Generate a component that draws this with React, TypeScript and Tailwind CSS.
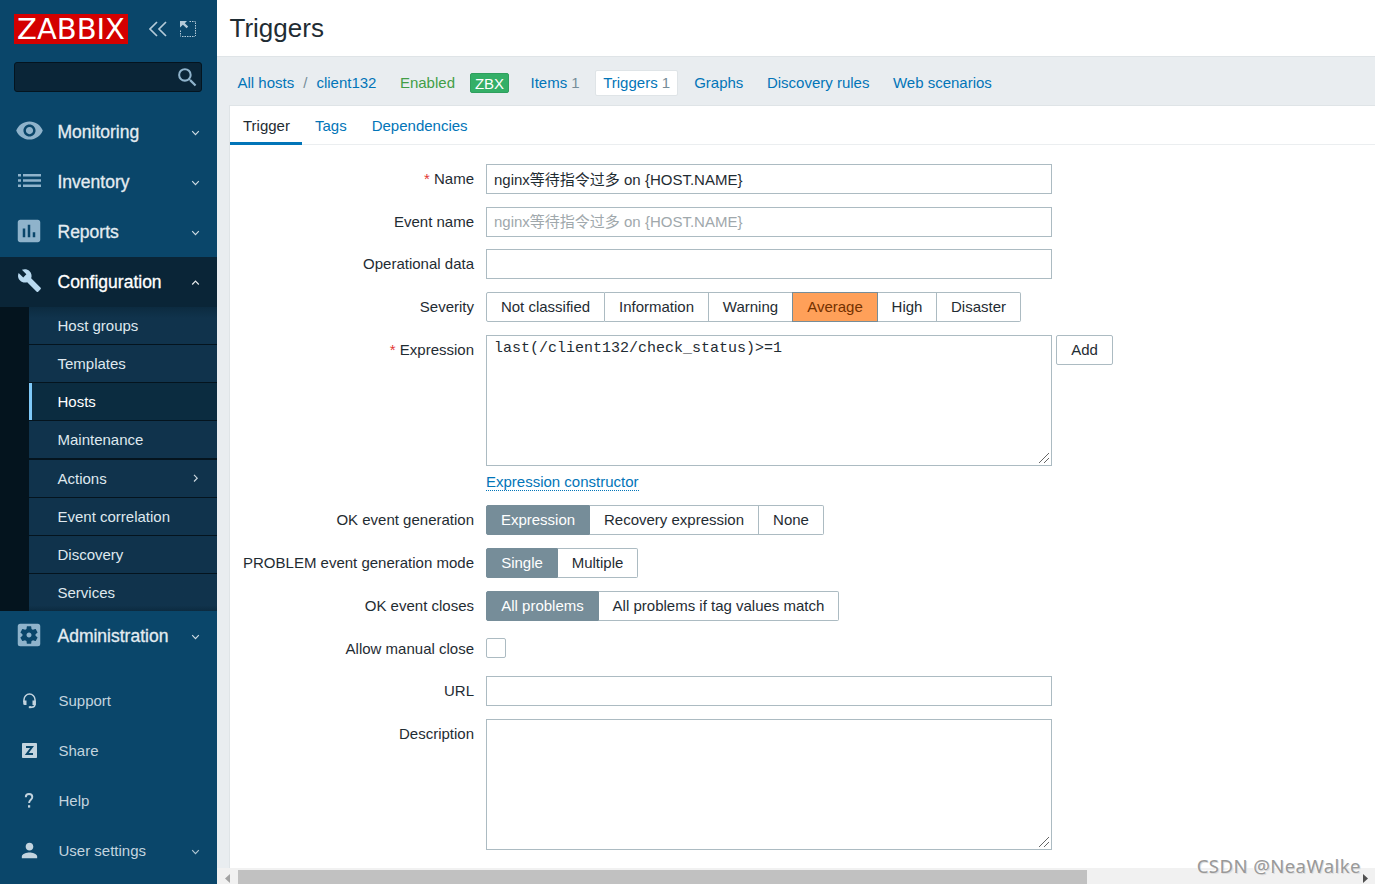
import React from 'react';
import clsx from 'clsx';
import {
  MdAssessment,
  MdBuild,
  MdPerson,
  MdSearch,
  MdSettingsApplications,
  MdVisibility,
} from 'react-icons/md';

type Direction = 'down' | 'up' | 'right';

const chevrons: Record<Direction, string> = {
  down: 'M1.2 3.2 4.5 6.6 7.8 3.2',
  up: 'M1.2 6.5 4.5 3.1 7.8 6.5',
  right: 'M3 0.9 6.2 4.2 3 7.5',
};

const Chevron: React.FC<{ direction: Direction }> = ({ direction }) => (
  <svg width="9" height="9" viewBox="0 0 9 9" fill="none" stroke="currentColor" strokeWidth="1.2" className="opacity-90">
    <path d={chevrons[direction]} />
  </svg>
);

const ListIcon = () => (
  <svg width="23" height="13" viewBox="0 0 23 13" fill="currentColor">
    <path d="M0 0h3v2.6H0zM5 0h18v2.6H5zM0 5.2h3v2.6H0zM5 5.2h18v2.6H5zM0 10.4h3V13H0zM5 10.4h18V13H5z" />
  </svg>
);

const HeadsetIcon = () => (
  <svg width="15" height="16" viewBox="0 0 15 16" fill="none" stroke="currentColor">
    <path d="M2 9V6.600a5.500 5.500 0 0 1 11 0V11c0 2-1.300 3.200-3.200 3.200H8" strokeWidth="1.500" />
    <path d="M1.200 7.500h3.300v4.500h-1.800a1.500 1.500 0 0 1-1.500-1.500zM13.800 7.500h-3.300v4.500h3.300z" fill="currentColor" stroke="none" />
    <path d="M6.800 14.200h2.600" strokeWidth="2" />
  </svg>
);

const ShareIcon = () => (
  <svg width="15" height="15" viewBox="0 0 15 15">
    <rect width="15" height="15" rx="0.8" fill="currentColor" />
    <path d="M4 4h6L4.800 11h6.200" fill="none" stroke="#0a466a" strokeWidth="2" />
  </svg>
);

const HelpIcon = () => (
  <svg width="10" height="15" viewBox="0 0 10 15" fill="none" stroke="currentColor">
    <path d="M1.800 4.200C1.800 2 3.200 1 5 1s3.300 1.100 3.300 3c0 2.600-3.200 3-3.200 6" strokeWidth="1.900" />
    <path d="M4 12.200h2.200v2.400H4z" fill="currentColor" stroke="none" />
  </svg>
);

const menu = [
  { label: 'Monitoring', icon: <MdVisibility size={29} /> },
  { label: 'Inventory', icon: <ListIcon /> },
  { label: 'Reports', icon: <MdAssessment size={30} /> },
];

const submenu = [
  'Host groups',
  'Templates',
  'Hosts',
  'Maintenance',
  'Actions',
  'Event correlation',
  'Discovery',
  'Services',
];

const footer = [
  { label: 'Support', icon: <HeadsetIcon /> },
  { label: 'Share', icon: <ShareIcon /> },
  { label: 'Help', icon: <HelpIcon /> },
  { label: 'User settings', icon: <MdPerson size={23} />, expandable: true },
];

interface MenuItemProps {
  label: string;
  icon: React.ReactNode;
  open?: boolean;
}

const MenuItem: React.FC<MenuItemProps> = ({ label, icon, open }) => (
  <a
    className={clsx(
      'flex h-[50px] shrink-0 items-center pr-[17px] text-[17.5px]',
      open ? 'bg-[#0a2537] text-white' : 'text-[#e4ecf1]',
    )}
  >
    <span className={clsx('mb-[3px] flex w-[58px] justify-center', open ? 'text-[#b8d9ef]' : 'text-[#8fb3cb]')}>
      {icon}
    </span>
    <span className="-ml-[0.500px] grow [-webkit-text-stroke:0.3px_currentColor]">{label}</span>
    <Chevron direction={open ? 'up' : 'down'} />
  </a>
);

const Sidebar = () => (
  <aside className="flex w-[217px] shrink-0 flex-col bg-[#0a466a]">
    <div className="flex h-[62px] shrink-0 items-start pl-[14px] pt-[14px]">
      <div className="flex h-[30px] w-[114px] items-center justify-center bg-[#d40000] text-[29px] leading-[30px] text-white [font-family:'DejaVu_Sans',sans-serif]">
        ZABBIX
      </div>
      <svg className="ml-[21px] mt-[7px]" width="18" height="16" viewBox="0 0 18 16" fill="none" stroke="#b4cad8" strokeWidth="1.700">
        <path d="M8 1 1 8l7 7M17 1l-7 7 7 7" />
      </svg>
      <svg className="ml-[13px] mt-[7px]" width="16" height="16" viewBox="0 0 16 16" fill="none" stroke="#b4cad8">
        <path d="M9.500 .5h6M15.500 1.500v13.500M.5 9.500v6M2 15.500h13" strokeDasharray="1.500 1" />
        <path d="M0 0h7L4.800 2.200 8.200 5.600 6.600 7.200 2.900 3.800 0 6.500z" fill="#b4cad8" stroke="none" />
      </svg>
    </div>
    <div className="mx-[14px] mb-[15px] flex h-[30px] w-[188px] shrink-0 items-center justify-end rounded-[3px] border border-[#04141f] bg-[#0a2537] pr-px text-[#8fb3cb]">
      <MdSearch size={25} />
    </div>

    {menu.map((item) => (
      <MenuItem key={item.label} {...item} />
    ))}
    <MenuItem label="Configuration" icon={<MdBuild size={25} />} open />

    <ul className="h-[304px] shrink-0 bg-[#04141e] pl-[29px] text-[15px] text-[#dfe8ee]">
      {submenu.map((label) => (
        <li
          key={label}
          className={clsx(
            'flex items-center pr-[17px]',
            label === 'Hosts'
              ? 'border-l-[3px] border-[#7fc9f8] bg-[#0b2c40] pl-[25.500px] text-white'
              : 'bg-[#10334c] pl-[28.500px]',
            label === 'Maintenance' ? 'mb-[2px] h-[37px]' : 'mb-px h-[37px]',
            label === 'Host groups' && 'bg-linear-to-b from-[#0c2b40] to-[#10334c] to-30%',
            label === 'Services' && 'mb-0 bg-linear-to-t from-[#0c2b40] to-[#10334c] to-15%',
          )}
        >
          <span className="grow">{label}</span>
          {label === 'Actions' && <Chevron direction="right" />}
        </li>
      ))}
    </ul>

    <MenuItem label="Administration" icon={<MdSettingsApplications size={30} />} />

    <ul className="mt-[15px] text-[15px] text-[#c3d4df]">
      {footer.map(({ label, icon, expandable }) => (
        <li key={label} className="flex h-[50px] items-center pr-[17px]">
          <span className="mb-px flex w-[58.500px] justify-center">{icon}</span>
          <span className="grow">{label}</span>
          {expandable && <Chevron direction="down" />}
        </li>
      ))}
    </ul>
  </aside>
);

const Link: React.FC<{ className?: string; children: React.ReactNode }> = ({ className, children }) => (
  <a className={clsx('text-[#0275b8]', className)}>{children}</a>
);

const Breadcrumbs = () => (
  <nav className="flex h-[50px] shrink-0 items-center whitespace-pre pb-px pl-[20.500px] pt-[3px]">
    <Link>All hosts</Link>
    <span className="ml-[9px] text-[#768d99]">/</span>
    <Link className="ml-[9px]">client132</Link>
    <span className="ml-[23.500px] text-[#429e47]">Enabled</span>
    <span className="ml-[15px] flex h-5 w-[39px] items-center justify-center rounded-[2px] border border-[#2f9f5e] bg-[#34af67] pt-px text-white">
      ZBX
    </span>
    <Link className="ml-[21.500px]">
      Items <span className="text-[#768d99]">1</span>
    </Link>
    <span className="ml-[15.500px] flex h-[26px] w-[83px] items-center justify-center rounded-[2px] border border-[#dfe4e7] bg-white">
      <Link>
        Triggers <span className="text-[#768d99]">1</span>
      </Link>
    </span>
    <Link className="ml-4">Graphs</Link>
    <Link className="ml-[23.500px]">Discovery rules</Link>
    <Link className="ml-[23.500px]">Web scenarios</Link>
  </nav>
);

interface RowProps {
  label: string;
  height: string;
  required?: boolean;
  children: React.ReactNode;
}

const Row: React.FC<RowProps> = ({ label, height, required, children }) => (
  <div className={clsx('flex items-start', height)}>
    <label className="mr-3 w-[244px] text-right leading-[30px]">
      {required && <span className="text-[#e33734]">* </span>}
      {label}
    </label>
    {children}
  </div>
);

const TextBox: React.FC<{ value?: string; muted?: boolean }> = ({ value, muted }) => (
  <div
    className={clsx(
      'h-[30px] w-[566px] border border-[#acbbc2] bg-white px-[7px]',
      muted ? 'leading-[28px] text-[#a0a8ac]' : 'leading-[30px]',
    )}
  >
    {value}
  </div>
);

const TextArea: React.FC<{ value?: string }> = ({ value }) => (
  <div className="flex h-[131px] w-[566px] items-start justify-between border border-[#acbbc2] bg-white pl-[7px]">
    <span className="pt-1 text-[15px] leading-[18px] [font-family:'Liberation_Mono',monospace]">{value}</span>
    <svg className="mb-px mr-px self-end" width="12" height="12" viewBox="0 0 12 12" stroke="#555" strokeWidth="0.900">
      <path d="M1 11 11 1M6 11l5-5" />
    </svg>
  </div>
);

interface Segment {
  label: string;
  width: string;
}

const Segments: React.FC<{ items: Segment[]; active: string; activeClass?: string }> = ({
  items,
  active,
  activeClass = 'border-[#768d99] bg-[#768d99] text-white',
}) => (
  <div className="flex h-[30px]">
    {items.map(({ label, width }) => (
      <span
        key={label}
        className={clsx(
          'flex items-center justify-center border-y border-r first:rounded-l-[2px] first:border-l last:rounded-r-[2px]',
          width,
          label === active ? activeClass : 'border-[#acbbc2] bg-white',
        )}
      >
        {label}
      </span>
    ))}
  </div>
);

const severities: Segment[] = [
  { label: 'Not classified', width: 'w-[119px]' },
  { label: 'Information', width: 'w-[104px]' },
  { label: 'Warning', width: 'w-[84px]' },
  { label: 'Average', width: 'w-[86px]' },
  { label: 'High', width: 'w-[59px]' },
  { label: 'Disaster', width: 'w-[84px]' },
];

const TriggerForm = () => (
  <form className="pt-[19px]">
    <Row label="Name" height="h-[43px]" required>
      <TextBox value="nginx等待指令过多 on {HOST.NAME}" />
    </Row>
    <Row label="Event name" height="h-[42px]">
      <TextBox value="nginx等待指令过多 on {HOST.NAME}" muted />
    </Row>
    <Row label="Operational data" height="h-[43px]">
      <TextBox />
    </Row>
    <Row label="Severity" height="h-[43px]">
      <Segments
        items={severities}
        active="Average"
        activeClass="-ml-px border-l border-[#768d99] bg-[#ffa059] text-[#733100]"
      />
    </Row>
    <Row label="Expression" height="h-[170px]" required>
      <div>
        <TextArea value="last(/client132/check_status)>=1" />
        <Link className="mt-[7px] inline-block border-b border-dotted border-[#0275b8] leading-[17px]">
          Expression constructor
        </Link>
      </div>
      <button
        type="button"
        className="ml-1 h-[30px] w-[57px] rounded-[2px] border border-[#acbbc2] bg-white"
      >
        Add
      </button>
    </Row>
    <Row label="OK event generation" height="h-[43px]">
      <Segments
        items={[
          { label: 'Expression', width: 'w-[104px]' },
          { label: 'Recovery expression', width: 'w-[169px]' },
          { label: 'None', width: 'w-[65px]' },
        ]}
        active="Expression"
      />
    </Row>
    <Row label="PROBLEM event generation mode" height="h-[43px]">
      <Segments
        items={[
          { label: 'Single', width: 'w-[72px]' },
          { label: 'Multiple', width: 'w-[80px]' },
        ]}
        active="Single"
      />
    </Row>
    <Row label="OK event closes" height="h-[43px]">
      <Segments
        items={[
          { label: 'All problems', width: 'w-[113px]' },
          { label: 'All problems if tag values match', width: 'w-[240px]' },
        ]}
        active="All problems"
      />
    </Row>
    <Row label="Allow manual close" height="h-[42px]">
      <span className="mt-1 size-5 rounded-[2px] border border-[#acbbc2] bg-white" />
    </Row>
    <Row label="URL" height="h-[43px]">
      <TextBox />
    </Row>
    <Row label="Description" height="h-[131px]">
      <TextArea />
    </Row>
  </form>
);

const Scrollbar = () => (
  <div className="flex h-4 shrink-0 items-end bg-[#f1f1f1]">
    <svg className="ml-[8px]" width="5" height="11" viewBox="0 0 5 11">
      <path d="M5 1v9L0 5.500z" fill="#a3a3a3" />
    </svg>
    <div className="ml-[8px] h-[14px] w-[849px] bg-[#c1c1c1]" />
    <svg className="ml-auto mr-[7px]" width="5" height="11" viewBox="0 0 5 11">
      <path d="M0 1v9l5-4.500z" fill="#505050" />
    </svg>
  </div>
);

export default function App() {
  return (
    <div className="relative flex h-[884px] w-[1375px] overflow-hidden bg-[#e9edf0] text-[15px] leading-[18px] text-[#1f2c33] [font-family:'Liberation_Sans','Noto_Sans_CJK_SC',sans-serif]">
      <Sidebar />
      <main className="flex min-w-0 grow flex-col">
        <header className="flex h-[57px] shrink-0 items-center border-b border-[#dfe4e7] bg-white pl-[12.500px]">
          <h1 className="text-[26px] leading-8">Triggers</h1>
        </header>
        <Breadcrumbs />
        <section className="-mt-[2px] ml-3 min-h-0 grow overflow-hidden border-l border-t border-[#dfe4e7] bg-white">
          <div className="flex h-[39px] border-b border-[#ebeef0]">
            <span className="-mb-px w-[72px] border-b-[3px] border-[#0275b8] pl-[13px] leading-[40px]">Trigger</span>
            <Link className="ml-[13px] leading-[40px]">Tags</Link>
            <Link className="ml-[25px] leading-[40px]">Dependencies</Link>
          </div>
          <TriggerForm />
        </section>
        <Scrollbar />
      </main>
      <span className="absolute right-[14px] top-[854px] text-[18.500px] leading-6 tracking-[0.450px] text-[#999] [font-family:'Noto_Sans',sans-serif] [text-shadow:-1px_-1px_0_#fff,1px_1px_0_#ddd]">
        CSDN @NeaWalke
      </span>
    </div>
  );
}
